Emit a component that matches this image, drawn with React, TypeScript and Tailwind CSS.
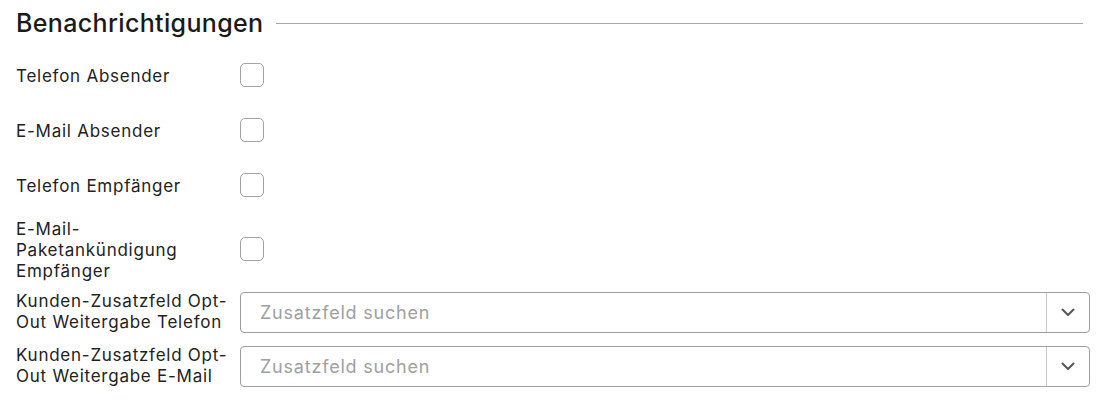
import React from "react";

const font = { fontFamily: "Inter, 'Noto Sans', sans-serif" };

function Checkbox() {
  return <div className="w-[24px] h-[24px] rounded-[5px] border border-[#a3a3a3] bg-white" />;
}

function Select() {
  return (
    <div className="flex-1 h-[41px] flex items-stretch border border-[#9e9e9e] rounded-[4px] bg-white">
      <div className="flex-1 flex items-center pl-[19px] text-[18px] tracking-[0.8px] text-[#a0a0a0]">Zusatzfeld suchen</div>
      <div className="w-[43px] border-l border-[#c8c8c8] flex items-center justify-center">
        <svg width="14" height="9" viewBox="0 0 14 9" fill="none">
          <path d="M1.5 1.5 L7 7 L12.5 1.5" stroke="#555" strokeWidth="2" strokeLinecap="round" strokeLinejoin="round" />
        </svg>
      </div>
    </div>
  );
}

const label = "w-[224px] text-[17px] tracking-[0.75px] leading-[21px] text-[#222]";

export default function App() {
  return (
    <div className="w-[1099px] h-[414px] bg-white pl-[16px] pr-[9px] text-[#222]" style={font}>
      <div className="h-[47px] flex items-center pr-[7px]">
        <h2 className="text-[25px] tracking-[0.35px] font-medium text-[#1a1a1a] leading-none">Benachrichtigungen</h2>
        <div className="flex-1 h-px bg-[#a8a8a8] ml-[13px]" />
      </div>
      {["Telefon Absender", "E-Mail Absender", "Telefon Empfänger"].map((l) => (
        <div key={l} className="h-[55px] flex items-center">
          <div className={label + " pt-[3px]"}>{l}</div>
          <Checkbox />
        </div>
      ))}
      <div className="h-[74px] flex items-center">
        <div className={label + " pt-[2px]"}>E-Mail-<br />Paketankündigung<br />Empfänger</div>
        <Checkbox />
      </div>
      <div className="pt-[5px] flex flex-col gap-[12px]">
        {["Telefon", "E-Mail"].map((k) => (
          <div key={k} className="flex items-center">
            <div className={label}>Kunden-Zusatzfeld Opt-<br />Out Weitergabe {k}</div>
            <Select />
          </div>
        ))}
      </div>
    </div>
  );
}
